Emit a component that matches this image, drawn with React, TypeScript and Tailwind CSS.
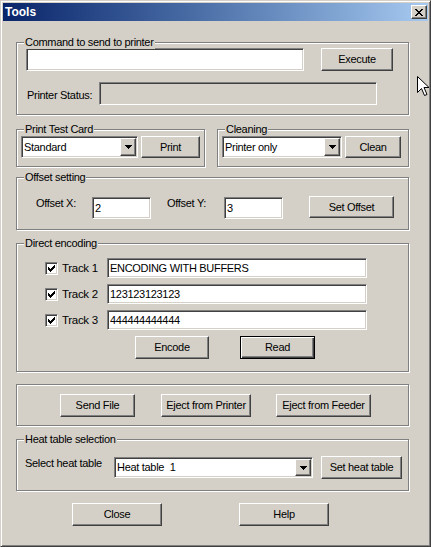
const sunken =
  "border border-t-[#808080] border-l-[#808080] border-b-white border-r-white shadow-[inset_1px_1px_0_#404040,inset_-1px_-1px_0_#d4d0c8]";
const raised =
  "border border-t-white border-l-white border-b-[#404040] border-r-[#404040] shadow-[inset_-1px_-1px_0_#808080] bg-[#d4d0c8]";

function Btn({ label, className = "", isDefault = false }: { label: string; className?: string; isDefault?: boolean }) {
  const frame = isDefault
    ? "border border-black bg-[#d4d0c8] shadow-[inset_1px_1px_0_#fff,inset_-1px_-1px_0_#404040,inset_-2px_-2px_0_#808080]"
    : raised;
  return <button className={`${frame} flex items-center justify-center leading-[13px] ${className}`}>{label}</button>;
}

function Field({ value = "", className = "", disabled = false }: { value?: string; className?: string; disabled?: boolean }) {
  return (
    <input
      readOnly
      defaultValue={value}
      className={`${sunken} ${disabled ? "bg-[#d4d0c8]" : "bg-white"} pl-[2px] outline-none ${className}`}
    />
  );
}

function Arrow() {
  return (
    <svg width="7" height="4" viewBox="0 0 7 4" shapeRendering="crispEdges">
      <rect x="0" y="0" width="7" height="1" fill="#000" />
      <rect x="1" y="1" width="5" height="1" fill="#000" />
      <rect x="2" y="2" width="3" height="1" fill="#000" />
      <rect x="3" y="3" width="1" height="1" fill="#000" />
    </svg>
  );
}

function Combo({ value, className = "" }: { value: string; className?: string }) {
  return (
    <div className={`${sunken} bg-white flex items-stretch p-[1px] ${className}`}>
      <span className="flex-1 flex items-center pl-[1px] whitespace-pre">{value}</span>
      <span className={`${raised} w-[16px] flex items-center justify-center`}>
        <Arrow />
      </span>
    </div>
  );
}

function Check() {
  return (
    <span className={`${sunken} bg-white w-[13px] h-[13px] flex items-center justify-center shrink-0`}>
      <svg width="7" height="7" viewBox="0 0 7 7" shapeRendering="crispEdges">
        <rect x="6" y="0" width="1" height="1" fill="#000" />
        <rect x="5" y="1" width="2" height="1" fill="#000" />
        <rect x="0" y="2" width="1" height="1" fill="#000" />
        <rect x="4" y="2" width="3" height="1" fill="#000" />
        <rect x="0" y="3" width="2" height="1" fill="#000" />
        <rect x="3" y="3" width="3" height="1" fill="#000" />
        <rect x="0" y="4" width="5" height="1" fill="#000" />
        <rect x="1" y="5" width="3" height="1" fill="#000" />
        <rect x="2" y="6" width="1" height="1" fill="#000" />
      </svg>
    </span>
  );
}

function Group({ legend, className = "", children }: { legend?: string; className?: string; children?: React.ReactNode }) {
  return (
    <div className={`relative border border-[#808080] shadow-[inset_1px_1px_0_#fff,1px_1px_0_#fff] ${className}`}>
      {legend && (
        <span className="absolute -top-[7px] left-[7px] bg-[#d4d0c8] px-[1px] leading-[13px] whitespace-nowrap">
          {legend}
        </span>
      )}
      {children}
    </div>
  );
}

const tracks = [
  { name: "Track 1", value: "ENCODING WITH BUFFERS" },
  { name: "Track 2", value: "123123123123" },
  { name: "Track 3", value: "444444444444" },
];

export default function App() {
  return (
    <div className="relative w-[431px] h-[547px] bg-[#d4d0c8] text-black text-[11px] tracking-[-0.3px] font-['Liberation_Sans',Arial,sans-serif] border border-t-[#d4d0c8] border-l-[#d4d0c8] border-b-[#404040] border-r-[#404040] shadow-[inset_1px_1px_0_#fff,inset_-1px_-1px_0_#808080] p-[2px]">
      {/* title bar */}
      <div className="h-[18px] flex items-center bg-gradient-to-r from-[#0a246a] to-[#a6caf0]">
        <span className="ml-[2px] text-white font-bold text-[12px] tracking-normal">Tools</span>
        <button className={`${raised} ml-auto mr-[1px] w-[16px] h-[14px] flex items-center justify-center`}>
          <svg width="8" height="7" viewBox="0 0 8 7" shapeRendering="crispEdges">
            <rect x="0" y="0" width="2" height="1" fill="#000" />
            <rect x="6" y="0" width="2" height="1" fill="#000" />
            <rect x="1" y="1" width="2" height="1" fill="#000" />
            <rect x="5" y="1" width="2" height="1" fill="#000" />
            <rect x="2" y="2" width="4" height="1" fill="#000" />
            <rect x="3" y="3" width="2" height="1" fill="#000" />
            <rect x="2" y="4" width="4" height="1" fill="#000" />
            <rect x="1" y="5" width="2" height="1" fill="#000" />
            <rect x="5" y="5" width="2" height="1" fill="#000" />
            <rect x="0" y="6" width="2" height="1" fill="#000" />
            <rect x="6" y="6" width="2" height="1" fill="#000" />
          </svg>
        </button>
      </div>

      <div className="pl-[13px] flex flex-col">
        <Group legend="Command to send to printer" className="mt-[21px] w-[393px] h-[73px] pt-[5px] pl-[9px]">
          <div className="flex">
            <Field className="w-[278px] h-[23px]" />
            <Btn label="Execute" className="ml-[17px] w-[72px] h-[23px]" />
          </div>
          <div className="flex items-center mt-[11px]">
            <span className="w-[73px] pl-[1px] pt-[3px] leading-[13px]">Printer Status:</span>
            <Field disabled className="w-[278px] h-[23px]" />
          </div>
        </Group>

        <div className="flex mt-[14px]">
          <Group legend="Print Test Card" className="w-[189px] h-[38px] pt-[6px] pl-[4px]">
            <div className="flex">
              <Combo value="Standard" className="w-[117px] h-[22px]" />
              <Btn label="Print" className="ml-[3px] w-[59px] h-[22px]" />
            </div>
          </Group>
          <Group legend="Cleaning" className="ml-[12px] w-[192px] h-[38px] pt-[6px] pl-[4px]">
            <div className="flex">
              <Combo value="Printer only" className="w-[120px] h-[22px]" />
              <Btn label="Clean" className="ml-[3px] w-[56px] h-[22px]" />
            </div>
          </Group>
        </div>

        <Group legend="Offset setting" className="mt-[10px] w-[393px] h-[53px] pt-[19px] pl-[19px]">
          <div className="flex items-start">
            <span className="w-[56px] leading-[13px]">Offset X:</span>
            <Field value="2" className="w-[59px] h-[22px]" />
            <span className="ml-[16px] w-[57px] leading-[13px]">Offset Y:</span>
            <Field value="3" className="w-[59px] h-[22px]" />
            <Btn label="Set Offset" className="ml-[26px] -mt-[1px] w-[85px] h-[22px]" />
          </div>
        </Group>

        <Group legend="Direct encoding" className="mt-[13px] w-[393px] h-[129px] pt-[14px] pl-[28px]">
          {tracks.map((t) => (
            <div key={t.name} className="flex items-center h-[20px] mb-[6px]">
              <Check />
              <span className="ml-[4px] w-[45px] leading-[13px] text-[11.5px]">{t.name}</span>
              <Field value={t.value} className="w-[260px] h-[20px]" />
            </div>
          ))}
          <div className="flex mt-[2px]">
            <Btn label="Encode" className="ml-[90px] w-[74px] h-[23px]" />
            <Btn label="Read" isDefault className="ml-[31px] w-[75px] h-[23px]" />
          </div>
        </Group>

        <Group className="mt-[12px] w-[393px] h-[42px] pt-[9px] pl-[43px]">
          <div className="flex">
            <Btn label="Send File" className="w-[75px] h-[23px]" />
            <Btn label="Eject from Printer" className="ml-[26px] w-[90px] h-[23px]" />
            <Btn label="Eject from Feeder" className="ml-[25px] w-[95px] h-[23px]" />
          </div>
        </Group>

        <Group legend="Heat table selection" className="mt-[13px] w-[393px] h-[52px] pt-[16px] pl-[8px]">
          <div className="flex items-start">
            <span className="w-[89px] mt-[1px] leading-[13px]">Select heat table</span>
            <Combo value="Heat table  1" className="mt-[1px] w-[199px] h-[21px]" />
            <Btn label="Set heat table" className="ml-[8px] w-[81px] h-[23px]" />
          </div>
        </Group>

        <div className="flex mt-[12px]">
          <Btn label="Close" className="ml-[56px] w-[90px] h-[23px]" />
          <Btn label="Help" className="ml-[77px] w-[90px] h-[23px]" />
        </div>
      </div>

      {/* mouse pointer */}
      <svg className="absolute left-[416px] top-[75px]" width="13" height="21" viewBox="0 0 13 21">
        <path d="M0.5 0.5 L0.5 16.5 L4.5 12.5 L7.5 19.5 L10 18.5 L7 11.5 L12 11.5 Z" fill="#fff" stroke="#000" strokeWidth="1" />
      </svg>
    </div>
  );
}
